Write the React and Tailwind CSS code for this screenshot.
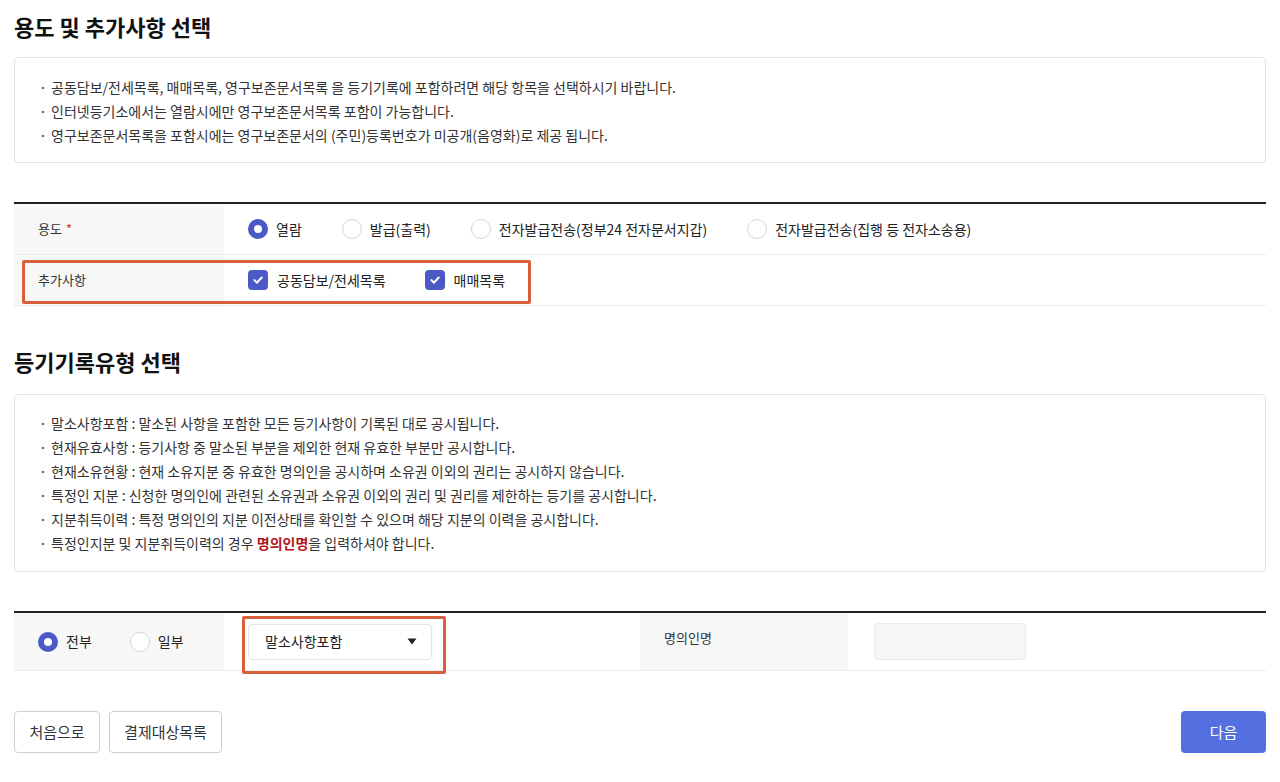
import React from 'react';

const font = { fontFamily: '"Noto Sans CJK KR", "Noto Sans", sans-serif' };

const Radio = ({ checked, label }) => (
  <label className="flex items-center gap-2 cursor-pointer">
    {checked ? (
      <span className="w-5 h-5 rounded-full bg-[#4a59c6] flex items-center justify-center">
        <span className="w-2 h-2 rounded-full bg-white" />
      </span>
    ) : (
      <span className="w-5 h-5 rounded-full border border-[#d6d6d6] bg-white" />
    )}
    <span className="text-[14px] text-[#222]">{label}</span>
  </label>
);

const Check = ({ label }) => (
  <label className="flex items-center gap-[9px] cursor-pointer">
    <span className="w-5 h-5 rounded-[4px] bg-[#4a59c6] flex items-center justify-center">
      <svg width="12" height="12" viewBox="0 0 12 12" fill="none">
        <path d="M2.4 6.1 L5 8.7 L9.7 3.5" stroke="white" strokeWidth="2" strokeLinecap="round" strokeLinejoin="round" />
      </svg>
    </span>
    <span className="text-[14px] text-[#222]">{label}</span>
  </label>
);

const Notice = ({ lines, className = '' }) => (
  <div className={`border border-[#e3e3e3] rounded-[4px] px-6 text-[14px] leading-[24px] text-[#333] ${className}`}>
    {lines.map((l, i) => (
      <div key={i} className="flex">
        <span className="w-[12px] shrink-0">·</span>
        <span>{l}</span>
      </div>
    ))}
  </div>
);

export default function App() {
  return (
    <div style={font} className="bg-white w-[1280px] h-[782px] overflow-hidden px-[14px] pt-[11px] text-[#222]">
      <h2 className="text-[22px] font-bold leading-[30px] text-[#111]">용도 및 추가사항 선택</h2>

      <Notice
        className="mt-[16px] pt-[17px] pb-[15px]"
        lines={[
          '공동담보/전세목록, 매매목록, 영구보존문서목록 을 등기기록에 포함하려면 해당 항목을 선택하시기 바랍니다.',
          '인터넷등기소에서는 열람시에만 영구보존문서목록 포함이 가능합니다.',
          '영구보존문서목록을 포함시에는 영구보존문서의 (주민)등록번호가 미공개(음영화)로 제공 됩니다.',
        ]}
      />

      <div className="mt-[39px] border-t-2 border-[#222]">
        <div className="flex h-[51px] border-b border-[#ececec]">
          <div className="w-[210px] bg-[#f7f7f7] flex items-center pl-6 text-[13px] text-[#333]">
            용도 <span className="text-[#c0392b] ml-1">*</span>
          </div>
          <div className="flex items-center gap-[40px] pl-6">
            <Radio checked label="열람" />
            <Radio label="발급(출력)" />
            <Radio label="전자발급전송(정부24 전자문서지갑)" />
            <Radio label="전자발급전송(집행 등 전자소송용)" />
          </div>
        </div>
        <div className="relative flex h-[51px] border-b border-[#ececec]">
          <div className="w-[210px] bg-[#f7f7f7] flex items-center pl-6 text-[13px] text-[#333]">추가사항</div>
          <div className="flex items-center gap-[39px] pl-6">
            <Check label="공동담보/전세목록" />
            <Check label="매매목록" />
          </div>
          <div className="absolute left-[8px] top-[5px] w-[509px] h-[44px] border-[3px] border-[#d9603d] rounded-[2px] pointer-events-none" />
        </div>
      </div>

      <h2 className="mt-[40px] text-[22px] font-bold leading-[30px] text-[#111]">등기기록유형 선택</h2>

      <Notice
        className="mt-[18px] pt-[16px] pb-[16px]"
        lines={[
          '말소사항포함 : 말소된 사항을 포함한 모든 등기사항이 기록된 대로 공시됩니다.',
          '현재유효사항 : 등기사항 중 말소된 부분을 제외한 현재 유효한 부분만 공시합니다.',
          '현재소유현황 : 현재 소유지분 중 유효한 명의인을 공시하며 소유권 이외의 권리는 공시하지 않습니다.',
          '특정인 지분 : 신청한 명의인에 관련된 소유권과 소유권 이외의 권리 및 권리를 제한하는 등기를 공시합니다.',
          '지분취득이력 : 특정 명의인의 지분 이전상태를 확인할 수 있으며 해당 지분의 이력을 공시합니다.',
          <>특정인지분 및 지분취득이력의 경우 <b className="text-[#b3161b]">명의인명</b>을 입력하셔야 합니다.</>,
        ]}
      />

      <div className="mt-[39px] border-t-2 border-[#222]">
        <div className="relative flex h-[58px] border-b border-[#ececec]">
          <div className="w-[210px] bg-[#f7f7f7] flex items-center gap-[38px] pl-6">
            <Radio checked label="전부" />
            <Radio label="일부" />
          </div>
          <div className="w-[416px] flex items-center pl-6">
            <div className="w-[184px] h-[36px] border border-[#e6e6e6] rounded-[4px] flex items-center justify-between pl-4 pr-[14px] text-[14px] text-[#222]">
              말소사항포함
              <svg width="10" height="7" viewBox="0 0 10 7">
                <path d="M0.5 0.5 H9.5 L5 6.5 Z" fill="#222" />
              </svg>
            </div>
          </div>
          <div className="w-[208px] bg-[#f7f7f7] flex items-center pl-6 pb-2 text-[13px] text-[#333]">명의인명</div>
          <div className="flex items-center pl-[26px]">
            <div className="w-[152px] h-[37px] bg-[#f6f6f6] border border-[#ebebeb] rounded-[4px]" />
          </div>
          <div className="absolute left-[228px] top-[3px] w-[204px] h-[58px] border-[3px] border-[#d9603d] rounded-[2px] pointer-events-none" />
        </div>
      </div>

      <div className="mt-[40px] flex items-center justify-between">
        <div className="flex gap-[9px]">
          <button className="w-[86px] h-[42px] border border-[#cfcfcf] rounded-[4px] bg-white text-[15px] text-[#333]">처음으로</button>
          <button className="w-[113px] h-[42px] border border-[#cfcfcf] rounded-[4px] bg-white text-[15px] text-[#333]">결제대상목록</button>
        </div>
        <button className="w-[85px] h-[42px] rounded-[4px] bg-[#5470e0] text-[15px] text-white">다음</button>
      </div>
    </div>
  );
}
